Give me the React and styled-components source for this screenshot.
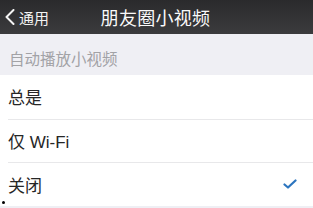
import React from 'react';
import styled, { createGlobalStyle } from 'styled-components';

const Global = createGlobalStyle`
  html, body {
    margin: 0;
    padding: 0;
    background: #efeff4;
  }
  body {
    font-family: "Liberation Sans", "Noto Sans CJK SC", sans-serif;
  }
`;

const Screen = styled.div`
  position: relative;
  width: 313px;
  height: 208px;
  overflow: hidden;
  background: #efeff4;
  display: flex;
  flex-direction: column;
`;

const NavBar = styled.div`
  height: 34px;
  flex-shrink: 0;
  display: grid;
  grid-template-columns: 1fr auto 1fr;
  align-items: center;
  background: linear-gradient(#2a2a2c, #3b3b3d);
  color: #fff;
`;

const Back = styled.div`
  display: flex;
  align-items: center;
  gap: 4px;
  padding-left: 4px;
  font-size: 15px;
  color: #f2f2f2;
`;

const Title = styled.div`
  font-size: 18px;
  letter-spacing: 0.3px;
  color: #fafafa;
  margin-left: -2px;
`;

const SectionHead = styled.div`
  height: 41px;
  flex-shrink: 0;
  display: flex;
  align-items: flex-end;
  padding: 0 0 6px 9px;
  box-sizing: border-box;
  font-size: 15.5px;
  color: #a2a2a6;
`;

const List = styled.div`
  background: #fff;
  display: flex;
  flex-direction: column;
`;

const Row = styled.div`
  height: 43.5px;
  display: flex;
  align-items: center;
  justify-content: space-between;
  margin-left: 8px;
  padding-right: 16px;
  font-size: 17px;
  color: #262626;
  border-top: ${p => (p.$first ? 'none' : '1px solid #e8e8ea')};
  box-sizing: border-box;
`;

const Dot = styled.div`
  position: absolute;
  left: 2px;
  top: 201px;
  width: 3px;
  height: 3px;
  border-radius: 50%;
  background: #000;
`;

function Chevron() {
  return (
    <svg width="11" height="16" viewBox="0 0 11 16">
      <path d="M9.5 1 L2.5 8 L9.5 15" fill="none" stroke="#f4f4f4" strokeWidth="2" strokeLinecap="round" strokeLinejoin="round" />
    </svg>
  );
}

function Check() {
  return (
    <svg width="14" height="10" viewBox="0 0 14 10">
      <path d="M1.5 5.5 L5 8.5 L12.5 1.5" fill="none" stroke="#2c75bf" strokeWidth="2.2" strokeLinecap="round" strokeLinejoin="round" />
    </svg>
  );
}

const options = [
  { label: '总是' },
  { label: '仅 Wi-Fi' },
  { label: '关闭', checked: true },
];

function App() {
  return (
    <Screen>
      <Global />
      <NavBar>
        <Back>
          <Chevron />
          <span>通用</span>
        </Back>
        <Title>朋友圈小视频</Title>
        <div />
      </NavBar>
      <SectionHead>自动播放小视频</SectionHead>
      <List>
        {options.map((o, i) => (
          <Row key={o.label} $first={i === 0}>
            <span>{o.label}</span>
            {o.checked && <Check />}
          </Row>
        ))}
      </List>
      <Dot />
    </Screen>
  );
}

export default App;
